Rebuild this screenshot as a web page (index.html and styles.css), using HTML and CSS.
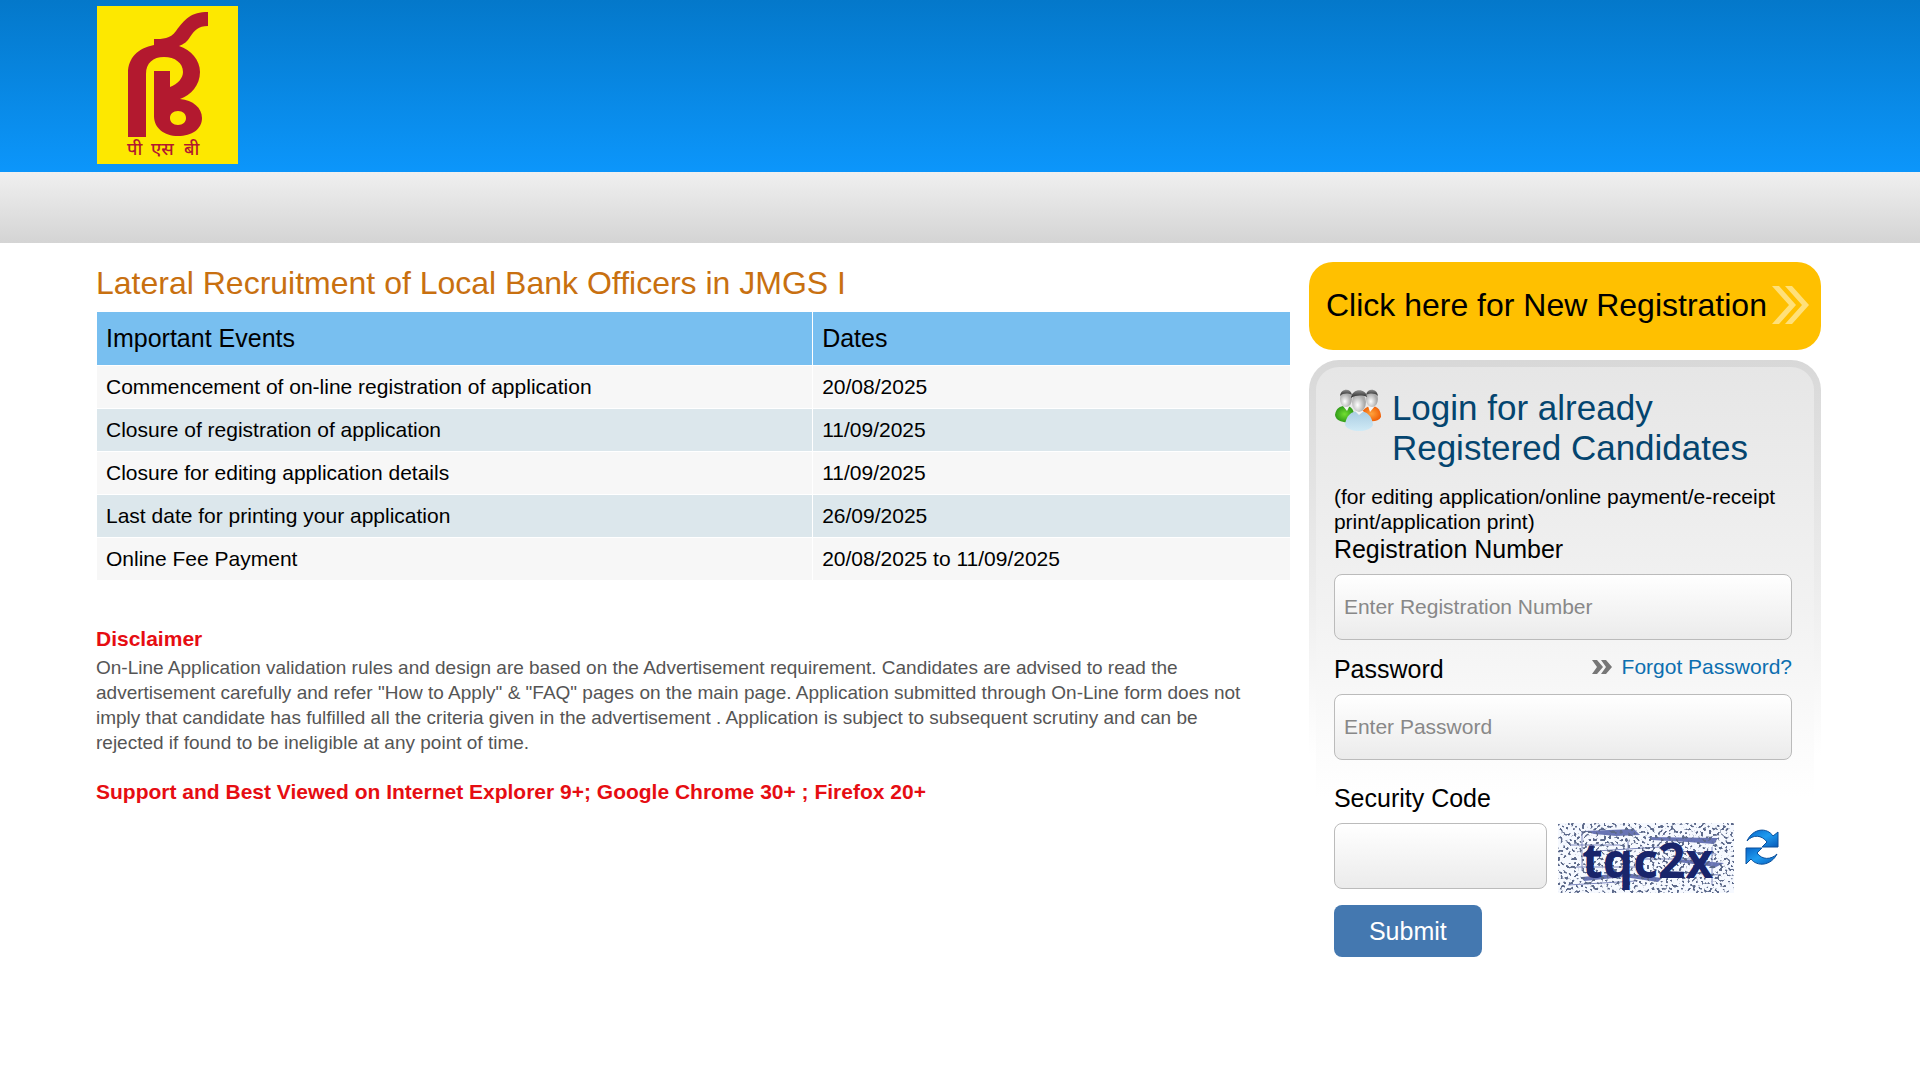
FILE: index.html
```html
<!DOCTYPE html>
<html lang="en">
<head>
  <meta charset="UTF-8">
  <meta name="viewport" content="width=device-width, initial-scale=1.0">
  <title>Lateral Recruitment of Local Bank Officers</title>
  <link rel="stylesheet" href="styles.css">
</head>
<body>

  <header class="header">
    <svg class="logo" viewBox="0 0 141 158" role="img" aria-label="PSB logo">
      <rect width="141" height="158" fill="#fde800"/>
      <path fill="#b3192f" fill-rule="evenodd" d="M111 6V20C101 20 98 24 93 31C90 36 87 38 82 40C94 44 103 54 103 66C103 79 94 89 83 93C96 94 105 102 105 112C105 123 95 130 81 130C67 130 57 122 57 110V65H73V81C81 78 86 72 86 66C86 57 78 51 67 51C56 51 49 57 49 68V131H31V67C31 52 41 42 57 39V33C66 33 73 33 79 25C88 13 94 6 111 6ZM81 105C76 105 73 108 73 112C73 116 76 119 81 119C86 119 89 116 89 112C89 108 86 105 81 105Z"/>
      <text class="logo-text" y="149"><tspan x="30">पी</tspan> <tspan x="54">एस</tspan> <tspan x="87">बी</tspan></text>
    </svg>
  </header>
  <nav class="nav-bar"></nav>

  <main class="container">
    <section class="content">
      <h1>Lateral Recruitment of Local Bank Officers in JMGS I</h1>
      <table class="events">
        <thead>
          <tr><th>Important Events</th><th>Dates</th></tr>
        </thead>
        <tbody>
          <tr><td>Commencement of on-line registration of application</td><td>20/08/2025</td></tr>
          <tr><td>Closure of registration of application</td><td>11/09/2025</td></tr>
          <tr><td>Closure for editing application details</td><td>11/09/2025</td></tr>
          <tr><td>Last date for printing your application</td><td>26/09/2025</td></tr>
          <tr><td>Online Fee Payment</td><td>20/08/2025 to 11/09/2025</td></tr>
        </tbody>
      </table>

      <h2 class="notice">Disclaimer</h2>
      <p class="disclaimer">On-Line Application validation rules and design are based on the Advertisement requirement. Candidates are advised to read the advertisement carefully and refer "How to Apply" &amp; "FAQ" pages on the main page. Application submitted through On-Line form does not imply that candidate has fulfilled all the criteria given in the advertisement . Application is subject to subsequent scrutiny and can be rejected if found to be ineligible at any point of time.</p>
      <p class="notice">Support and Best Viewed on Internet Explorer 9+; Google Chrome 30+ ; Firefox 20+</p>
    </section>

    <aside class="sidebar">
      <a class="register" href="#">
        <span>Click here for New Registration</span>
        <svg width="38" height="38" viewBox="0 0 38 38" fill="#ffe07a" aria-hidden="true">
          <path d="M0 0H7L24 19L7 38H0L17 19Z"/>
          <path d="M13 0H20L37 19L20 38H13L30 19Z"/>
        </svg>
      </a>

      <form class="login">
        <div class="login-title">
          <svg width="48" height="44" viewBox="0 0 48 44" aria-hidden="true">
            <defs>
              <radialGradient id="face" cx="40%" cy="65%">
                <stop offset="0" stop-color="#ffffff"/>
                <stop offset="1" stop-color="#aaaaaa"/>
              </radialGradient>
              <linearGradient id="hair" x1="0" y1="0" x2="0" y2="1">
                <stop offset="0" stop-color="#8a8a8a"/>
                <stop offset="1" stop-color="#222222"/>
              </linearGradient>
              <radialGradient id="green">
                <stop offset="0" stop-color="#72df32"/>
                <stop offset="1" stop-color="#2f9a18"/>
              </radialGradient>
              <radialGradient id="orange">
                <stop offset="0" stop-color="#ffa33c"/>
                <stop offset="1" stop-color="#f06008"/>
              </radialGradient>
              <linearGradient id="blue" x1="0" y1="0" x2="0" y2="1">
                <stop offset="0" stop-color="#a9cce2"/>
                <stop offset="1" stop-color="#d0eaf6"/>
              </linearGradient>
            </defs>
            <path fill="url(#green)" d="M1 27C2 20 6 18 11 18C17 18 20 21 20 28L17 34C9 35 2 33 1 27Z"/>
            <path fill="url(#orange)" d="M28 24C31 19 35 18 38 18C44 18 47 23 47 29C45 33 40 34 34 33Z"/>
            <path fill="#f6f6f6" d="M9 18L13 23L16 17ZM34 18L36 24L41 18Z"/>
            <ellipse cx="12" cy="11" rx="6" ry="8" fill="url(#face)"/>
            <path fill="url(#hair)" d="M6 8C7 0 17 0 18 7C14 5 9 5 6 8Z"/>
            <ellipse cx="38" cy="11" rx="6" ry="8" fill="url(#face)"/>
            <path fill="url(#hair)" d="M32 7C33 0 43 0 44 8C41 5 36 5 32 7Z"/>
            <path fill="url(#blue)" d="M11 37C12 28 17 23 25 23C33 23 38 28 39 37C35 45 15 45 11 37Z"/>
            <path fill="#f6f6f6" d="M21 23L25 27L30 23Z"/>
            <ellipse cx="25" cy="14" rx="7" ry="10" fill="url(#face)"/>
            <path fill="url(#hair)" d="M17 10C18 0 32 0 33 9C28 7 22 7 17 10Z"/>
          </svg>
          <h2>Login for already Registered Candidates</h2>
        </div>
        <p class="hint">(for editing application/online payment/e-receipt print/application print)</p>

        <label for="reg-no">Registration Number</label>
        <input type="text" id="reg-no" placeholder="Enter Registration Number">

        <div class="label-row">
          <label for="password">Password</label>
          <a class="forgot" href="#">
            <svg width="20" height="14" viewBox="0 0 20 14" fill="#777" aria-hidden="true">
              <path d="M0 0H5L11 7L5 14H0L5 7Z"/>
              <path d="M9 0H14L20 7L14 14H9L14 7Z"/>
            </svg>
            Forgot Password?
          </a>
        </div>
        <input type="password" id="password" placeholder="Enter Password">

        <label class="code-label" for="code">Security Code</label>
        <div class="code-row">
          <input type="text" id="code">
          <svg class="captcha" width="176" height="70" viewBox="0 0 176 70" role="img" aria-label="Security code">
            <defs>
              <filter id="noise" x="0" y="0" width="100%" height="100%" color-interpolation-filters="sRGB">
                <feTurbulence type="fractalNoise" baseFrequency="0.37" numOctaves="1" seed="7"/>
                <feColorMatrix values="0 0 0 0 0.36  0 0 0 0 0.41  0 0 0 0 0.54  -12 0 0 0 5.5"/>
              </filter>
            </defs>
            <rect width="176" height="70" fill="#f6f9ff"/>
            <g fill="#6874b4">
              <path d="M26 8L76 6L82 12L58 13L36 11Z"/>
              <path d="M90 14L160 15L156 21L130 19L94 17Z"/>
              <path d="M24 54L66 50L104 55L100 59L66 54L26 58Z"/>
              <path d="M118 36L166 40L158 44L120 39Z"/>
            </g>
            <g stroke="#7c86bd" fill="none">
              <path d="M12 22H62M38 28L102 24M84 36H150M18 44H80M108 27L158 31M10 62L78 58M104 48L162 52M70 18V50M154 24V62M24 8V48"/>
            </g>
            <rect width="176" height="70" filter="url(#noise)"/>
            <text class="captcha-text" x="24" y="55">tqc2x</text>
          </svg>
          <button type="button" class="refresh" aria-label="Refresh code">
            <svg width="34" height="36" viewBox="0 0 34 36">
              <defs>
                <linearGradient id="arrow" x1="0" y1="0" x2="1" y2="1">
                  <stop offset="0" stop-color="#0865c8"/>
                  <stop offset="0.5" stop-color="#1f9cf0"/>
                  <stop offset="1" stop-color="#0759b8"/>
                </linearGradient>
              </defs>
              <g fill="url(#arrow)" stroke="#0b4f9b">
                <path d="M2 12C8 -1 22 -2 28 7L33 3V18H17L22 13C17 6 8 5 2 12Z"/>
                <path d="M32 25C26 37 12 38 6 30L1 35V19H17L12 24C17 31 26 31 32 25Z"/>
              </g>
            </svg>
          </button>
        </div>
        <button type="submit" class="submit">Submit</button>
      </form>
    </aside>
  </main>

</body>
</html>
```
FILE: styles.css
```css
* {
  box-sizing: border-box;
}

body {
  margin: 0;
  font-family: "Liberation Sans", Arial, sans-serif;
  font-size: 21px;
  line-height: 25px;
  color: #000;
  background-color: #fff;
}

h1,
h2,
p {
  margin: 0;
}

.header {
  height: 172px;
  padding: 6px 97px;
  background: linear-gradient(#0478ca, #0c96fb);
}

.logo {
  display: block;
  width: 141px;
  height: 158px;
}

.logo-text {
  font-family: "Noto Sans", "Noto Sans Devanagari", sans-serif;
  font-size: 18px;
  font-weight: 500;
  fill: #b3192f;
}

.nav-bar {
  height: 71px;
  background: linear-gradient(#f0f0f0, #d4d4d4);
}

.container {
  display: flex;
  gap: 18px;
  padding: 19px 99px 40px 96px;
}

.content {
  flex: 7;
}

.sidebar {
  flex: 3;
}

h1 {
  font-size: 32px;
  line-height: 42px;
  font-weight: normal;
  color: #c87010;
}

/* 日程表 */
.events {
  width: 100%;
  margin-top: 7px;
  border-spacing: 1px;
}

.events th,
.events td {
  padding: 9px;
  line-height: 24px;
  text-align: left;
}

.events th {
  padding: 14px 9px;
  font-size: 25px;
  line-height: 25px;
  font-weight: normal;
  background-color: #78bff0;
}

.events th:first-child {
  width: 60%;
}

.events tr {
  background-color: #f7f7f7;
}

.events tbody tr:nth-child(even) {
  background-color: #dce7ec;
}

.notice {
  margin-top: 45px;
  font-size: 21px;
  font-weight: bold;
  color: #e60d12;
}

.disclaimer {
  margin: 4px 0 24px;
  padding-right: 36px;
  font-size: 19px;
  color: #555;
}

.disclaimer + .notice {
  margin-top: 0;
}

/* 新用户注册按钮 */
.register {
  display: flex;
  align-items: center;
  justify-content: space-between;
  height: 88px;
  padding: 0 11px 2px 17px;
  border-radius: 24px;
  background-color: #ffc000;
  color: #000;
  font-size: 32px;
  text-decoration: none;
  white-space: nowrap;
}

/* 登录 */
.login {
  margin-top: 10px;
  padding: 21px 22px 24px 18px;
  border: 7px solid transparent;
  border-radius: 30px;
  background:
    linear-gradient(#e6e6e6, #f2f2f2 40%, #fff 70%) padding-box,
    linear-gradient(#d8d8d8, #ececec 35%, #fff 63%) border-box;
}

.login-title {
  display: flex;
  gap: 10px;
}

.login-title svg {
  flex: none;
}

.login h2 {
  font-size: 35px;
  line-height: 40px;
  font-weight: normal;
  color: #04456f;
}

.hint {
  margin-top: 16px;
}

.login label {
  display: block;
  font-size: 25px;
  line-height: 30px;
}

.login input {
  display: block;
  width: 100%;
  height: 66px;
  margin-top: 10px;
  padding: 0 9px;
  border: 1px solid #bbb;
  border-radius: 8px;
  background: linear-gradient(#fff, #ebebeb);
  font: inherit;
}

.login input::placeholder {
  color: #888;
}

.label-row {
  display: flex;
  justify-content: space-between;
  align-items: flex-start;
  margin-top: 14px;
}

.forgot {
  display: flex;
  align-items: center;
  gap: 10px;
  color: #0c6fb0;
  text-decoration: none;
}

.login .code-label {
  margin-top: 23px;
}

.code-row {
  display: flex;
  gap: 11px;
  margin-top: 10px;
}

.code-row input {
  flex: 1;
  margin-top: 0;
}

.captcha {
  flex: none;
}

.captcha-text {
  font-family: "Noto Sans", sans-serif;
  font-size: 48px;
  font-weight: bold;
  fill: #19256b;
}

.refresh {
  align-self: flex-start;
  padding: 6px 13px 0 0;
  border: none;
  background: none;
  cursor: pointer;
}

.submit {
  margin-top: 12px;
  padding: 12px 35px;
  border: none;
  border-radius: 8px;
  background-color: #4478b0;
  color: #fff;
  font: inherit;
  font-size: 25px;
  line-height: 28px;
  cursor: pointer;
}

.submit:hover {
  background-color: #35639a;
}
```
